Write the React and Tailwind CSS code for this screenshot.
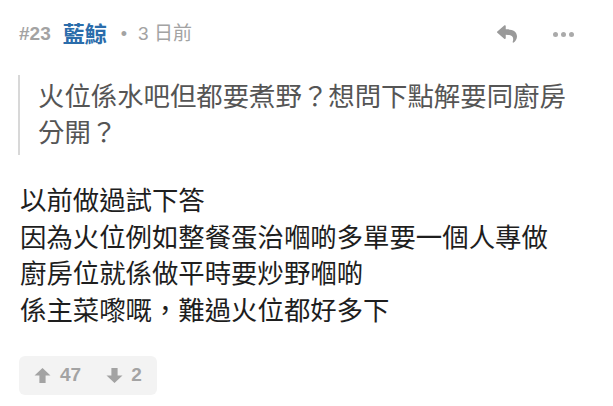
import React from "react";
import { FaReply } from "react-icons/fa";

const font = { fontFamily: '"Liberation Sans", "Noto Sans CJK TC", "Noto Sans", sans-serif' };

function Up({ className }) {
  return (
    <svg viewBox="0 0 17 15" className={className} fill="currentColor">
      <path d="M8.5 0 L16.5 7.6 L11.6 7.6 L11.6 15 L5.4 15 L5.4 7.6 L0.5 7.6 Z" />
    </svg>
  );
}
function Down({ className }) {
  return (
    <svg viewBox="0 0 17 15" className={className} fill="currentColor">
      <path d="M8.5 15 L16.5 7.4 L11.6 7.4 L11.6 0 L5.4 0 L5.4 7.4 L0.5 7.4 Z" />
    </svg>
  );
}

export default function App() {
  return (
    <div className="w-[613px] h-[406px] bg-white overflow-hidden" style={font}>
      <div className="flex items-center justify-between pl-[19px] pr-[39px] mt-[10px] h-[48px]">
        <div className="flex items-center">
          <span className="text-[19px] text-[#a3a3a3] font-bold">#23</span>
          <span className="ml-[12px] text-[22px] text-[#2b6dab] font-bold">藍鯨</span>
          <span className="ml-[14px] text-[18px] text-[#a3a3a3]">•</span>
          <span className="ml-[11px] text-[19px] text-[#a3a3a3]">3 日前</span>
        </div>
        <div className="flex items-center gap-[34px]">
          <FaReply className="text-[#9a9a9a] w-[24px] h-[20px]" />
          <div className="flex gap-[3px]">
            <span className="w-[5px] h-[5px] rounded-full bg-[#aaaaaa]" />
            <span className="w-[5px] h-[5px] rounded-full bg-[#aaaaaa]" />
            <span className="w-[5px] h-[5px] rounded-full bg-[#aaaaaa]" />
          </div>
        </div>
      </div>
      <div className="ml-[18px] mt-[17px] border-l-2 border-[#d8d8d8] pl-[18px] pr-[40px] py-[4px] text-[26.4px] leading-[36px] text-[#555555]">
        火位係水吧但都要煮野？想問下點解要同廚房分開？
      </div>
      <div className="ml-[20px] mt-[28px] text-[26.4px] leading-[36.7px] text-[#1e1e1e]">
        <div>以前做過試下答</div>
        <div>因為火位例如整餐蛋治嗰啲多單要一個人專做</div>
        <div>廚房位就係做平時要炒野嗰啲</div>
        <div>係主菜嚟嘅，難過火位都好多下</div>
      </div>
      <div className="ml-[19px] mt-[26px] inline-flex items-center h-[39px] w-[138px] rounded-[6px] bg-[#f3f3f3] pl-[15px] text-[#a3a3a3] text-[19px] font-bold">
        <Up className="w-[17px] h-[15px]" />
        <span className="ml-[9px]">47</span>
        <Down className="ml-[25px] w-[17px] h-[15px]" />
        <span className="ml-[8px]">2</span>
      </div>
    </div>
  );
}
